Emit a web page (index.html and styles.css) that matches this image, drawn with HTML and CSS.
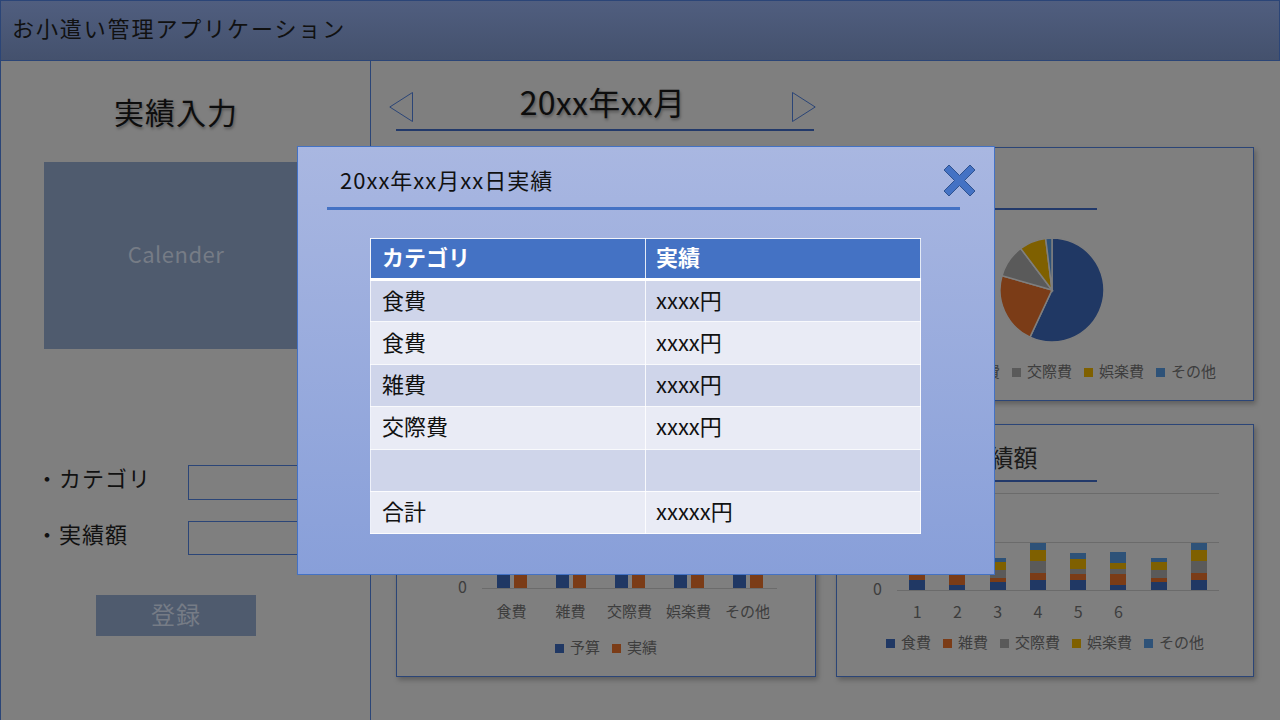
FILE: index.html
```html
<!DOCTYPE html>
<html lang="ja">
<head>
<meta charset="utf-8">
<title>お小遣い管理アプリケーション</title>
<link rel="stylesheet" href="styles.css">
</head>
<body>
<div class="app">
  <header class="topbar">お小遣い管理アプリケーション</header>
  <div class="main">
    <aside class="entry">
      <h1 class="entry-title">実績入力</h1>
      <div class="calendar">Calender</div>
      <div class="form">
        <div class="field"><span class="field-label">・カテゴリ</span><span class="field-input"></span></div>
        <div class="field field-second"><span class="field-label">・実績額</span><span class="field-input"></span></div>
      </div>
      <button class="submit" type="button">登録</button>
    </aside>

    <section class="dashboard">
      <div class="month-nav">
        <svg class="tri" viewBox="0 0 24 30" width="24" height="30"><polygon points="23.5,0.5 0.8,15 23.5,29.5" /></svg>
        <span class="month">20xx年xx月</span>
        <svg class="tri" viewBox="0 0 24 30" width="24" height="30"><polygon points="0.5,0.5 23.2,15 0.5,29.5" /></svg>
      </div>
      <div class="month-rule"></div>

      <div class="charts">
        <div class="panel">
          <div class="panel-title"></div>
          <div class="panel-rule"></div>
          <svg class="trend" viewBox="0 0 330 120" width="330" height="120">
            <polyline points="0,100 55,80 110,85 165,60 220,50 275,40 330,30"/>
          </svg>
        </div>

        <div class="panel">
          <div class="panel-title pie-title">実績割合</div>
          <div class="panel-rule"></div>
          <svg class="pie" viewBox="0 0 110 110" width="110" height="110">
            <path class="s-food" d="M55 55 L55 3 A52 52 0 1 1 33.02 102.13 Z"/>
            <path class="s-misc" d="M55 55 L33.02 102.13 A52 52 0 0 1 5.01 40.67 Z"/>
            <path class="s-social" d="M55 55 L5.01 40.67 A52 52 0 0 1 23.71 13.47 Z"/>
            <path class="s-fun" d="M55 55 L23.71 13.47 A52 52 0 0 1 48.66 3.39 Z"/>
            <path class="s-other" d="M55 55 L48.66 3.39 A52 52 0 0 1 55 3 Z"/>
          </svg>
          <div class="legend legend-pie">
            <span class="key"><i class="sw c-food"></i>食費</span>
            <span class="key"><i class="sw c-misc"></i>雑費</span>
            <span class="key"><i class="sw c-social"></i>交際費</span>
            <span class="key"><i class="sw c-fun"></i>娯楽費</span>
            <span class="key"><i class="sw c-other"></i>その他</span>
          </div>
        </div>

        <div class="panel">
          <div class="panel-title">予算と実績</div>
          <div class="panel-rule"></div>
          <div class="chart-body cmp-body">
            <div class="y-axis cmp-axis"><span>10000</span><span>5000</span><span>0</span></div>
            <div class="plot cmp-plot">
              <div class="group"><i class="bar c-food" style="height:70px"></i><i class="bar c-misc" style="height:62px"></i></div>
              <div class="group"><i class="bar c-food" style="height:45px"></i><i class="bar c-misc" style="height:50px"></i></div>
              <div class="group"><i class="bar c-food" style="height:35px"></i><i class="bar c-misc" style="height:28px"></i></div>
              <div class="group"><i class="bar c-food" style="height:35px"></i><i class="bar c-misc" style="height:40px"></i></div>
              <div class="group"><i class="bar c-food" style="height:25px"></i><i class="bar c-misc" style="height:20px"></i></div>
            </div>
          </div>
          <div class="x-labels cmp-labels"><span>食費</span><span>雑費</span><span>交際費</span><span>娯楽費</span><span>その他</span></div>
          <div class="legend legend-cmp">
            <span class="key"><i class="sw c-food"></i>予算</span>
            <span class="key"><i class="sw c-misc"></i>実績</span>
          </div>
        </div>

        <div class="panel">
          <div class="panel-title">日別実績額</div>
          <div class="panel-rule"></div>
          <div class="chart-body day-body">
            <div class="y-axis day-axis"><span>1000</span><span>500</span><span>0</span></div>
            <div class="plot day-plot">
              <div class="slot"><div class="stack"><i class="c-food" style="height:10px"></i><i class="c-misc" style="height:5px"></i><i class="c-social" style="height:8px"></i><i class="c-fun" style="height:10px"></i><i class="c-other" style="height:5px"></i></div></div>
              <div class="slot"><div class="stack"><i class="c-food" style="height:5px"></i><i class="c-misc" style="height:10px"></i><i class="c-social" style="height:6px"></i><i class="c-fun" style="height:8px"></i><i class="c-other" style="height:6px"></i></div></div>
              <div class="slot"><div class="stack"><i class="c-food" style="height:8px"></i><i class="c-misc" style="height:4px"></i><i class="c-social" style="height:8px"></i><i class="c-fun" style="height:8px"></i><i class="c-other" style="height:4px"></i></div></div>
              <div class="slot"><div class="stack"><i class="c-food" style="height:10px"></i><i class="c-misc" style="height:7px"></i><i class="c-social" style="height:12px"></i><i class="c-fun" style="height:11px"></i><i class="c-other" style="height:7px"></i></div></div>
              <div class="slot"><div class="stack"><i class="c-food" style="height:10px"></i><i class="c-misc" style="height:6px"></i><i class="c-social" style="height:5px"></i><i class="c-fun" style="height:10px"></i><i class="c-other" style="height:6px"></i></div></div>
              <div class="slot"><div class="stack"><i class="c-food" style="height:5px"></i><i class="c-misc" style="height:11px"></i><i class="c-social" style="height:5px"></i><i class="c-fun" style="height:6px"></i><i class="c-other" style="height:11px"></i></div></div>
              <div class="slot"><div class="stack"><i class="c-food" style="height:8px"></i><i class="c-misc" style="height:4px"></i><i class="c-social" style="height:8px"></i><i class="c-fun" style="height:8px"></i><i class="c-other" style="height:4px"></i></div></div>
              <div class="slot"><div class="stack"><i class="c-food" style="height:10px"></i><i class="c-misc" style="height:7px"></i><i class="c-social" style="height:12px"></i><i class="c-fun" style="height:11px"></i><i class="c-other" style="height:7px"></i></div></div>
            </div>
          </div>
          <div class="x-labels day-labels"><span>1</span><span>2</span><span>3</span><span>4</span><span>5</span><span>6</span><span></span><span></span></div>
          <div class="legend legend-day">
            <span class="key"><i class="sw c-food"></i>食費</span>
            <span class="key"><i class="sw c-misc"></i>雑費</span>
            <span class="key"><i class="sw c-social"></i>交際費</span>
            <span class="key"><i class="sw c-fun"></i>娯楽費</span>
            <span class="key"><i class="sw c-other"></i>その他</span>
          </div>
        </div>
      </div>
    </section>
  </div>

  <div class="modal">
    <div class="modal-head">
      <span class="modal-title">20xx年xx月xx日実績</span>
      <svg class="close" viewBox="0 0 33 33" width="33" height="33">
        <polygon points="1,6 6,1 16.5,11.5 27,1 32,6 21.5,16.5 32,27 27,32 16.5,21.5 6,32 1,27 11.5,16.5"/>
      </svg>
    </div>
    <div class="modal-rule"></div>
    <table class="result">
      <thead>
        <tr><th>カテゴリ</th><th>実績</th></tr>
      </thead>
      <tbody>
        <tr><td>食費</td><td>xxxx円</td></tr>
        <tr><td>食費</td><td>xxxx円</td></tr>
        <tr><td>雑費</td><td>xxxx円</td></tr>
        <tr><td>交際費</td><td>xxxx円</td></tr>
        <tr><td></td><td></td></tr>
        <tr><td>合計</td><td>xxxxx円</td></tr>
      </tbody>
    </table>
  </div>
</div>
</body>
</html>
```

FILE: styles.css
```css
* { box-sizing: border-box; }

html, body { margin: 0; padding: 0; }

body {
  width: 1280px;
  height: 720px;
  overflow: hidden;
  background: #7f7f7f;
  font-family: "Noto Sans CJK JP", "Noto Sans", sans-serif;
  color: #0d0d0d;
}

.app {
  position: relative;
  display: flex;
  flex-direction: column;
  width: 1280px;
  height: 720px;
}

/* header */
.topbar {
  flex: none;
  height: 61px;
  border: 1px solid #2b4577;
  background: linear-gradient(#505e7f, #44516d);
  font-size: 22px;
  letter-spacing: 1.9px;
  line-height: 53px;
  padding-left: 11px;
  color: #111;
}

.main {
  flex: 1;
  display: flex;
  min-height: 0;
}

/* left entry panel */
.entry {
  flex: none;
  width: 371px;
  border-left: 1px solid #2b4577;
  border-right: 1px solid #2b4577;
  display: flex;
  flex-direction: column;
}

.entry-title {
  margin: 30px 0 0 43px;
  width: 264px;
  height: 40px;
  text-align: center;
  font-size: 30px;
  font-weight: normal;
  line-height: 40px;
  letter-spacing: 1px;
  text-shadow: 1px 2px 3px rgba(0, 0, 0, 0.35);
}

.calendar {
  margin: 31px 0 0 43px;
  width: 264px;
  height: 187px;
  padding-bottom: 5px;
  background: #4f5b6e;
  color: #767c86;
  font-size: 22px;
  letter-spacing: 0.5px;
  display: flex;
  align-items: center;
  justify-content: center;
}

.form {
  margin-top: 116px;
  display: flex;
  flex-direction: column;
  gap: 21px;
}

.field {
  display: flex;
  align-items: flex-start;
  padding-left: 35px;
}

.field-label {
  width: 152px;
  font-size: 22px;
  line-height: 24px;
  letter-spacing: 1px;
  color: #111;
}

.field-input {
  width: 150px;
  height: 35px;
  border: 1.5px solid #2b4577;
}

.field-second .field-input { height: 34px; }

.submit {
  margin: 40px 0 0 95px;
  width: 160px;
  height: 41px;
  border: none;
  padding: 0 0 4px;
  background: #4f5b6e;
  color: #767c86;
  font-family: inherit;
  font-size: 24px;
  letter-spacing: 1px;
}

/* dashboard */
.dashboard {
  flex: 1;
  display: flex;
  flex-direction: column;
}

.month-nav {
  margin: 24px 0 0 18px;
  width: 427px;
  height: 36px;
  display: flex;
  justify-content: space-between;
  align-items: flex-start;
}

.tri {
  margin-top: 7px;
  display: block;
}

.tri polygon {
  fill: none;
  stroke: #2b4577;
  stroke-width: 1;
}

.month {
  font-size: 32px;
  line-height: 32px;
  letter-spacing: 0.3px;
  text-shadow: 1px 2px 3px rgba(0, 0, 0, 0.35);
}

.month-rule {
  margin: 8px 0 0 25px;
  width: 418px;
  height: 2px;
  background: #22396a;
}

.charts {
  margin: 16px 0 0 25px;
  display: grid;
  grid-template-columns: 420px 418px;
  grid-template-rows: 254px 253px;
  column-gap: 20px;
  row-gap: 23px;
}

.panel {
  border: 1px solid #2b4577;
  box-shadow: 2px 3px 5px rgba(0, 0, 0, 0.25);
  display: flex;
  flex-direction: column;
  color: #3d3d3d;
}

.panel-title {
  margin: 15px 0 0 21px;
  width: 239px;
  height: 36px;
  text-align: center;
  font-size: 24px;
  line-height: 34px;
  white-space: nowrap;
  color: #1a1a1a;
}

.pie-title {
  margin-top: 20px;
  text-align: left;
}

.panel-rule {
  margin: 4px 0 0 21px;
  width: 239px;
  height: 2px;
  background: #22396a;
}

.trend {
  display: block;
  margin: 30px 0 0 45px;
}

.trend polyline {
  fill: none;
  stroke: #203864;
  stroke-width: 2;
}

/* pie */
.pie {
  display: block;
  margin: 25px 0 0 160px;
}

.pie path {
  stroke: #7f7f7f;
  stroke-width: 1.5;
}

.s-food { fill: #203864; }
.s-misc { fill: #7b3c17; }
.s-social { fill: #5a5a5a; }
.s-fun { fill: #7f6000; }
.s-other { fill: #2e5278; }

.c-food { background: #203864; }
.c-misc { background: #7b3c17; }
.c-social { background: #5a5a5a; }
.c-fun { background: #7f6000; }
.c-other { background: #2e5278; }

/* legends */
.legend {
  display: flex;
  justify-content: center;
  gap: 12px;
  height: 20px;
  font-size: 15px;
  line-height: 18px;
  color: #3d3d3d;
}

.key {
  display: flex;
  align-items: center;
}

.sw {
  display: block;
  width: 9px;
  height: 9px;
  margin: 2px 6px 0 0;
}

.legend-pie { margin-top: 16px; padding-left: 24px; }
.legend-cmp { margin-top: 15px; }
.legend-day { margin-top: 10px; }

/* bar charts */
.chart-body {
  display: flex;
  align-items: flex-start;
}

.y-axis {
  display: flex;
  flex-direction: column;
  justify-content: space-between;
  align-items: flex-end;
  height: 118px;
  margin-top: -10px;
  margin-bottom: -10px;
  font-size: 16px;
  line-height: 18px;
  padding: 0 0 4px;
  color: #3d3d3d;
  white-space: nowrap;
}

.plot {
  height: 98px;
  border-top: 1px solid #6b6b6b;
  border-bottom: 1px solid #6b6b6b;
  background: linear-gradient(#6b6b6b, #6b6b6b) 0 48px / 100% 1px no-repeat;
  display: flex;
}

.cmp-body { margin-top: 9px; }
.cmp-axis { width: 40px; margin-left: 30px; }
.cmp-plot { width: 295px; margin-left: 15px; }

.group {
  flex: 1;
  display: flex;
  justify-content: center;
  align-items: flex-end;
  gap: 4px;
}

.bar {
  display: block;
  width: 13px;
}

.day-body { margin-top: 11px; }
.day-axis { width: 32px; margin-left: 13px; }
.day-plot { width: 322px; margin-left: 15px; }

.slot {
  flex: 1;
  display: flex;
  justify-content: center;
  align-items: flex-end;
}

.stack {
  width: 16px;
  display: flex;
  flex-direction: column-reverse;
}

.stack i { display: block; }

.x-labels {
  display: flex;
  height: 20px;
  font-size: 15px;
  line-height: 18px;
  color: #3d3d3d;
}

.x-labels span {
  flex: 1;
  text-align: center;
  white-space: nowrap;
}

.cmp-labels { margin: 13px 0 0 85px; width: 295px; }
.day-labels { margin: 11px 0 0 60px; width: 322px; font-size: 16px; }

/* modal */
.modal {
  position: absolute;
  left: 297px;
  top: 146px;
  width: 698px;
  height: 429px;
  border: 1px solid #4472c4;
  background: linear-gradient(#a9b7e1, #889fd9);
}

.modal-head {
  display: flex;
  justify-content: space-between;
  align-items: center;
  height: 34px;
  margin-top: 16px;
  padding: 0 18px 0 42px;
}

.modal-title {
  font-size: 22px;
  line-height: 30px;
  padding-bottom: 3px;
  letter-spacing: 1px;
  color: #111;
}

.close { display: block; }

.close polygon {
  fill: #4472c4;
  stroke: #2f528f;
  stroke-width: 1;
  stroke-linejoin: round;
}

.modal-rule {
  margin: 10px 0 0 29px;
  width: 633px;
  height: 3px;
  background: #4472c4;
}

.result {
  margin: 28px 0 0 72px;
  width: 551px;
  border-collapse: collapse;
  border: 1px solid rgba(255, 255, 255, 0.8);
  font-size: 22px;
  line-height: 28px;
  color: #111;
}

.result th,
.result td {
  border: 1px solid rgba(255, 255, 255, 0.85);
  text-align: left;
  vertical-align: middle;
  padding: 0 0 5px 11px;
  width: 50%;
}

.result th {
  height: 41px;
  background: #4472c4;
  color: #fff;
  font-weight: bold;
  border-bottom: 3px solid #fff;
}

.result td { height: 42.4px; }

.result td + td,
.result th + th { padding-left: 10px; }

.result tbody tr:nth-child(odd) td { background: #cfd5ea; }
.result tbody tr:nth-child(even) td { background: #e9ebf5; }
```
